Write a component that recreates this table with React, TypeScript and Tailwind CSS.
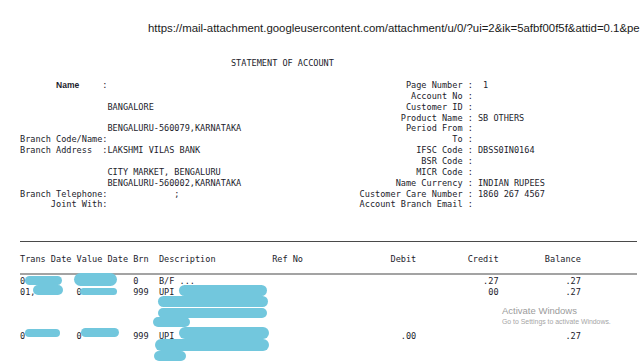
import React from "react";

const place = (items: [number, string][]) => {
  let s = "";
  for (const [col, t] of items) {
    while (s.length < col) s += " ";
    s += t;
  }
  return s;
};

const L = ({ children }: { children?: React.ReactNode }) => (
  <div className="h-[10.85px] leading-[10.85px] whitespace-pre">{children}</div>
);

const right = (label: string, value = "") => {
  const pad = " ".repeat(Math.max(0, 20 - label.length));
  return pad + label + " : " + value;
};

const blobs: [number, number, number, number][] = [
  [25, 276, 37, 9],
  [74, 273, 43, 13],
  [33, 285, 30, 10],
  [80, 288, 37, 7],
  [179, 285, 88, 11],
  [158, 296, 110, 11],
  [158, 308, 109, 10],
  [153, 317, 37, 10],
  [25, 329, 35, 8],
  [81, 328, 38, 9],
  [179, 327, 90, 12],
  [155, 339, 114, 12],
  [154, 351, 32, 10],
];

export default function App() {
  return (
    <div className="relative w-[640px] h-[361px] overflow-hidden bg-white">
      <div className="pl-[148px] pt-[21px] h-[35px] text-[11.4px] leading-[14px] whitespace-nowrap text-[#1a1a1a] font-['Liberation_Sans',Arial,sans-serif]">
        https://mail-attachment.googleusercontent.com/attachment/u/0/?ui=2&amp;ik=5afbf00f5f&amp;attid=0.1&amp;pe
      </div>

      <div className="pl-[20px] pt-[23.4px] text-[8.55px] text-[#1c1c2c] font-['DejaVu_Sans_Mono',monospace]">
        <L>{place([[41, "STATEMENT OF ACCOUNT"]])}</L>
        <L />
        <div className="flex">
          <div className="w-[66ch] shrink-0">
            <L>
              {"       "}
              <span className="inline-block w-[46.3px] font-['Liberation_Sans',Arial,sans-serif] font-bold text-[8.5px]">Name</span>
              {":"}
            </L>
            <L />
            <L>{"                 BANGALORE"}</L>
            <L />
            <L>{"                 BENGALURU-560079,KARNATAKA"}</L>
            <L>{"Branch Code/Name:"}</L>
            <L>{"Branch Address  :LAKSHMI VILAS BANK"}</L>
            <L />
            <L>{"                 CITY MARKET, BENGALURU"}</L>
            <L>{"                 BENGALURU-560002,KARNATAKA"}</L>
            <L>{"Branch Telephone:             ;"}</L>
            <L>{"      Joint With:"}</L>
          </div>
          <div>
            <L>{right("Page Number", " 1")}</L>
            <L>{right("Account No")}</L>
            <L>{right("Customer ID")}</L>
            <L>{right("Product Name", "SB OTHERS")}</L>
            <L>{right("Period From")}</L>
            <L>{right("To")}</L>
            <L>{right("IFSC Code", "DBSS0IN0164")}</L>
            <L>{right("BSR Code")}</L>
            <L>{right("MICR Code")}</L>
            <L>{right("Name Currency", "INDIAN RUPEES")}</L>
            <L>{right("Customer Care Number", "1860 267 4567")}</L>
            <L>{right("Account Branch Email")}</L>
          </div>
        </div>

        <div className="mt-[30.5px] h-px w-[617px] bg-[#4a4a4a]" />
        <div className="mt-[12.3px]">
          <L>
            {place([
              [0, "Trans Date"],
              [11, "Value Date"],
              [22, "Brn"],
              [27, "Description"],
              [49, "Ref No"],
              [72, "Debit"],
              [87, "Credit"],
              [102, "Balance"],
            ])}
          </L>
        </div>
        <div className="mt-[8px] h-[2px] w-[617px] bg-[#a3a3a3]" />
        <div className="mt-[1.5px]">
          <L>{place([[0, "0"], [22, "0"], [27, "B/F ..."], [90, ".27"], [106, ".27"]])}</L>
          <L>{place([[0, "01,"], [11, "0"], [22, "999"], [27, "UPI"], [91, "00"], [106, ".27"]])}</L>
          <L />
          <L />
          <L />
          <L>{place([[0, "0"], [11, "0"], [22, "999"], [27, "UPI"], [74, ".00"], [106, ".27"]])}</L>
          <L />
          <L />
        </div>
      </div>

      {blobs.map(([x, y, w, h], i) => (
        <div
          key={i}
          className="absolute rounded-full bg-[#72c7dd]"
          style={{ left: x, top: y, width: w, height: h }}
        />
      ))}

      <div className="absolute left-[502px] top-[304px] font-['Liberation_Sans',Arial,sans-serif] text-[#9c9c9c] whitespace-nowrap">
        <div className="text-[9.5px] leading-[13px]">Activate Windows</div>
        <div className="text-[6.9px] leading-[9px] text-[#a6a6a6]">Go to Settings to activate Windows.</div>
      </div>
    </div>
  );
}
